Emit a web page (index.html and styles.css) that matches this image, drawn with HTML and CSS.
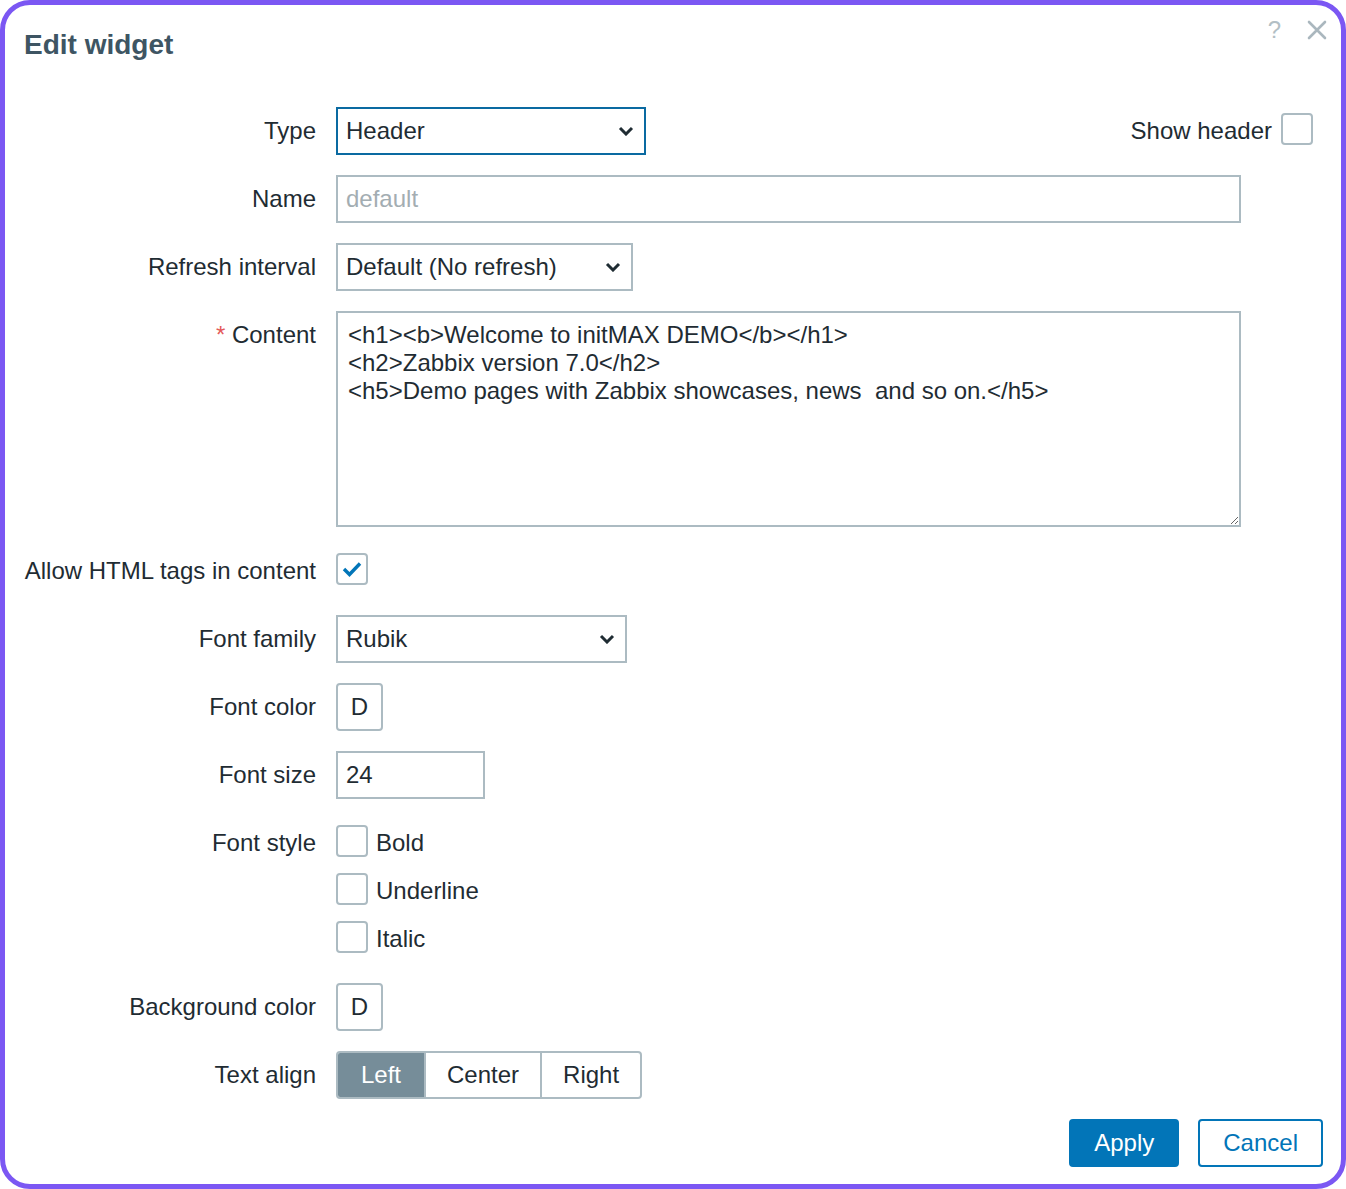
FILE: index.html
```html
<!DOCTYPE html>
<html lang="en">
<head>
<meta charset="utf-8">
<title>Edit widget</title>
<link rel="stylesheet" href="styles.css">
</head>
<body>
<div class="dialog">
  <div class="head">
    <h4 class="title">Edit widget</h4>
    <div class="head-icons">
      <span class="help">?</span>
      <span class="close">
        <svg width="20" height="20" viewBox="0 0 20 20"><path d="M2 2 L18 18 M18 2 L2 18" stroke="#aab7be" stroke-width="2.6" fill="none" stroke-linecap="round"/></svg>
      </span>
    </div>
  </div>

  <div class="form-grid">
    <label class="lbl">Type</label>
    <div class="field field-row">
      <div class="select select-focus w-type"><span>Header</span><svg class="chev" width="16" height="10" viewBox="0 0 16 10"><path d="M2 2 L8 8 L14 2" stroke="#1f2c33" stroke-width="3" fill="none"/></svg></div>
      <div class="show-header"><span>Show header</span><span class="cb cb-head"></span></div>
    </div>

    <label class="lbl">Name</label>
    <div class="field">
      <div class="input w-name"><span class="placeholder">default</span></div>
    </div>

    <label class="lbl">Refresh interval</label>
    <div class="field">
      <div class="select w-refresh"><span>Default (No refresh)</span><svg class="chev" width="16" height="10" viewBox="0 0 16 10"><path d="M2 2 L8 8 L14 2" stroke="#1f2c33" stroke-width="3" fill="none"/></svg></div>
    </div>

    <label class="lbl"><span class="req">*</span> Content</label>
    <div class="field">
      <textarea class="textarea" readonly>&lt;h1&gt;&lt;b&gt;Welcome to initMAX DEMO&lt;/b&gt;&lt;/h1&gt;
&lt;h2&gt;Zabbix version 7.0&lt;/h2&gt;
&lt;h5&gt;Demo pages with Zabbix showcases, news  and so on.&lt;/h5&gt;</textarea>
    </div>

    <label class="lbl">Allow HTML tags in content</label>
    <div class="field">
      <span class="cb cb-row checked"><svg width="28" height="28" viewBox="0 0 28 28"><path d="M6 14 L11.5 19.5 L22 8.5" stroke="#0275b8" stroke-width="3.4" fill="none"/></svg></span>
    </div>

    <label class="lbl">Font family</label>
    <div class="field">
      <div class="select w-family"><span>Rubik</span><svg class="chev" width="16" height="10" viewBox="0 0 16 10"><path d="M2 2 L8 8 L14 2" stroke="#1f2c33" stroke-width="3" fill="none"/></svg></div>
    </div>

    <label class="lbl">Font color</label>
    <div class="field">
      <span class="color-btn">D</span>
    </div>

    <label class="lbl">Font size</label>
    <div class="field">
      <div class="input w-size"><span>24</span></div>
    </div>

    <label class="lbl">Font style</label>
    <div class="field checklist">
      <div class="check-item"><span class="cb"></span><span>Bold</span></div>
      <div class="check-item"><span class="cb"></span><span>Underline</span></div>
      <div class="check-item"><span class="cb"></span><span>Italic</span></div>
    </div>

    <label class="lbl">Background color</label>
    <div class="field">
      <span class="color-btn">D</span>
    </div>

    <label class="lbl">Text align</label>
    <div class="field">
      <div class="segmented">
        <span class="seg active">Left</span>
        <span class="seg">Center</span>
        <span class="seg">Right</span>
      </div>
    </div>
  </div>

  <div class="footer">
    <button class="btn btn-primary">Apply</button>
    <button class="btn btn-alt">Cancel</button>
  </div>
</div>
</body>
</html>
```

FILE: styles.css
```css
html, body {
  margin: 0;
  padding: 0;
  background: #ffffff;
}

body {
  font-family: "Liberation Sans", Arial, sans-serif;
  font-size: 24px;
  color: #1f2c33;
}

.dialog {
  box-sizing: border-box;
  width: 1346px;
  height: 1189px;
  border: 5px solid #7b57f3;
  border-radius: 30px;
  background: #ffffff;
  display: flex;
  flex-direction: column;
}

.head {
  display: flex;
  justify-content: space-between;
  align-items: flex-start;
  padding: 24px 14px 0 19px;
}

.title {
  margin: 0;
  font-size: 28px;
  line-height: 32px;
  font-weight: bold;
  color: #3e5563;
}

.head-icons {
  display: flex;
  align-items: center;
  gap: 26px;
  margin-top: -10px;
}

.help {
  font-size: 24px;
  line-height: 22px;
  color: #b3bfc5;
}

.close {
  display: flex;
  width: 20px;
  height: 20px;
}

.form-grid {
  display: grid;
  grid-template-columns: 292px 1fr;
  column-gap: 20px;
  row-gap: 20px;
  padding: 46px 28px 0 19px;
}

.lbl {
  text-align: right;
  line-height: 48px;
  white-space: nowrap;
}

.req {
  color: #e45959;
}

.field {
  min-height: 48px;
}

.field-row {
  display: flex;
  align-items: flex-start;
}

.select,
.input {
  box-sizing: border-box;
  height: 48px;
  border: 2px solid #acbbc2;
  display: flex;
  align-items: center;
  padding: 0 10px 0 8px;
  line-height: 44px;
  background: #ffffff;
}

.select {
  justify-content: space-between;
}

.select-focus {
  border-color: #0a6aa1;
}

.chev {
  display: block;
}

.w-type { width: 310px; }
.w-name { width: 905px; }
.w-refresh { width: 297px; }
.w-family { width: 291px; }
.w-size { width: 149px; }

.placeholder {
  color: #a3adb2;
}

.show-header {
  margin-left: auto;
  display: flex;
  align-items: center;
  gap: 9px;
  height: 48px;
}

.cb-head {
  margin-bottom: 5px;
}

.cb {
  box-sizing: border-box;
  display: inline-flex;
  align-items: center;
  justify-content: center;
  width: 32px;
  height: 32px;
  border: 2px solid #acbbc2;
  border-radius: 4px;
  background: #ffffff;
  flex: none;
}

.cb-row {
  margin-top: 6px;
}

.textarea {
  box-sizing: border-box;
  display: block;
  width: 905px;
  height: 216px;
  margin: 0;
  border: 2px solid #acbbc2;
  border-radius: 0;
  padding: 8px 10px;
  font-family: "Liberation Sans", Arial, sans-serif;
  font-size: 24px;
  line-height: 28px;
  color: #1f2c33;
  resize: both;
  outline: none;
  overflow: hidden;
}

.color-btn {
  box-sizing: border-box;
  display: flex;
  align-items: center;
  justify-content: center;
  width: 47px;
  height: 48px;
  border: 2px solid #acbbc2;
  border-radius: 4px;
}

.checklist {
  display: flex;
  flex-direction: column;
}

.check-item {
  display: flex;
  align-items: center;
  gap: 8px;
  height: 48px;
}

.check-item .cb {
  margin-bottom: 4px;
}

.segmented {
  display: inline-flex;
  box-sizing: border-box;
  height: 48px;
  border: 2px solid #acbbc2;
  border-radius: 4px;
  overflow: hidden;
}

.seg {
  display: flex;
  align-items: center;
  padding: 0 21px;
  line-height: 44px;
  border-left: 2px solid #acbbc2;
}

.seg:first-child {
  border-left: none;
}

.seg.active {
  background: #768d99;
  color: #ffffff;
  padding: 0 23px;
}

.footer {
  display: flex;
  justify-content: flex-end;
  gap: 19px;
  padding: 20px 18px 0 0;
}

.btn {
  box-sizing: border-box;
  height: 48px;
  padding: 0 23px;
  border: 2px solid #0275b8;
  border-radius: 4px;
  font-family: "Liberation Sans", Arial, sans-serif;
  font-size: 24px;
  line-height: 44px;
  cursor: pointer;
}

.btn-primary {
  background: #0275b8;
  color: #ffffff;
}

.btn-alt {
  background: #ffffff;
  color: #0275b8;
}
```
